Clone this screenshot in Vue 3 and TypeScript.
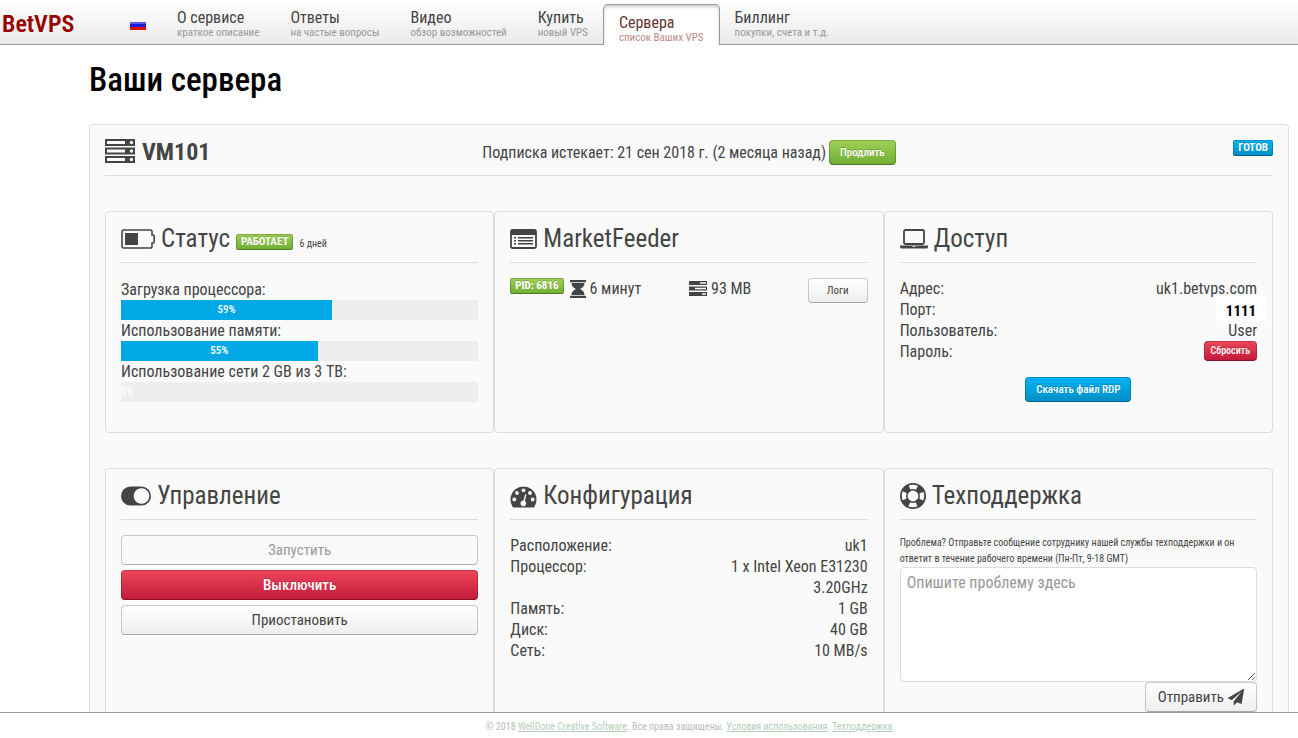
<script setup lang="ts">
import { ref } from 'vue'

interface NavItem {
  title: string
  note: string
  active?: boolean
}

interface Load {
  label: string
  percent: number
}

const nav: NavItem[] = [
  { title: 'О сервисе', note: 'краткое описание' },
  { title: 'Ответы', note: 'на частые вопросы' },
  { title: 'Видео', note: 'обзор возможностей' },
  { title: 'Купить', note: 'новый VPS' },
  { title: 'Сервера', note: 'список Ваших VPS', active: true },
  { title: 'Биллинг', note: 'покупки, счета и т.д.' },
]

const loads: Load[] = [
  { label: 'Загрузка процессора:', percent: 59 },
  { label: 'Использование памяти:', percent: 55 },
  { label: 'Использование сети 2 GB из 3 TB:', percent: 0 },
]

const config: [string, string][] = [
  ['Расположение:', 'uk1'],
  ['Процессор:', '1 x Intel Xeon E31230 3.20GHz'],
  ['Память:', '1 GB'],
  ['Диск:', '40 GB'],
  ['Сеть:', '10 MB/s'],
]

const message = ref('')
</script>

<template>
  <div class="page">
    <header class="top">
      <a class="logo" href="#">BetVPS</a>
      <a class="lang" href="#" aria-label="Русский">
        <svg width="16" height="11" viewBox="0 0 16 11">
          <rect width="16" height="11" fill="#f4f4f4" />
          <rect y="3" width="16" height="2" fill="#5a5af0" />
          <rect y="5" width="16" height="3" fill="#1c1cd8" />
          <rect y="8" width="16" height="3" fill="#e01010" />
        </svg>
      </a>
      <nav class="menu">
        <a v-for="item in nav" :key="item.title" href="#" class="menu-item" :class="{ active: item.active }">
          <span class="menu-title">{{ item.title }}</span>
          <span class="menu-note">{{ item.note }}</span>
        </a>
      </nav>
    </header>

    <main class="content">
      <h1>Ваши сервера</h1>
      <section class="panel">
        <div class="vm-head">
          <h2>
            <svg width="30" height="26" viewBox="0 0 30 26">
              <path d="M0 0h30v7H0zM0 8.500h30v7H0zM0 17h30v7H0z" fill="#444" />
              <path d="M2 2h18v3H2zM2 10.500h18v3H2zM2 19h18v3H2z" fill="#fafafa" />
              <g fill="#fafafa">
                <circle cx="26.500" cy="3.500" r="1.700" />
                <circle cx="26.500" cy="12" r="1.700" />
                <circle cx="26.500" cy="20.500" r="1.700" />
              </g>
            </svg>
            VM101
          </h2>
          <p class="expiry">
            Подписка истекает: 21 сен 2018 г. (2 месяца назад)
            <button type="button" class="btn small green">Продлить</button>
          </p>
          <span class="badge blue">ГОТОВ</span>
        </div>

        <div class="cards">
          <section class="card">
            <h3>
              <svg width="34" height="20" viewBox="0 0 34 20">
                <path d="M2.500 1h27a1.500 1.500 0 0 1 1.500 1.500V6h1.200a1 1 0 0 1 1 1v6a1 1 0 0 1-1 1H31v3.500a1.500 1.500 0 0 1-1.500 1.500h-27A1.500 1.500 0 0 1 1 17.500v-15A1.500 1.500 0 0 1 2.500 1z" fill="none" stroke="#444" stroke-width="1.600" />
                <path d="M4 4h13v12H4z" fill="#444" />
              </svg>
              Статус
              <span class="badge green">РАБОТАЕТ</span>
              <small>6 дней</small>
            </h3>
            <div class="loads">
              <div v-for="load in loads" :key="load.label">
                <div class="load-label">{{ load.label }}</div>
                <div class="track">
                  <div class="fill" :style="{ width: load.percent + '%' }">{{ load.percent }}%</div>
                </div>
              </div>
            </div>
          </section>

          <section class="card">
            <h3>
              <svg width="27" height="20" viewBox="0 0 27 20">
                <rect x="1" y="1" width="25" height="18" rx="1.500" fill="none" stroke="#444" stroke-width="1.800" />
                <path d="M1 1h25v5H1zM4 8h2v1.500H4zM8 8h15v1.500H8zM4 11h2v1.500H4zM8 11h15v1.500H8zM4 14h2v1.500H4zM8 14h15v1.500H8z" fill="#444" />
              </svg>
              MarketFeeder
            </h3>
            <div class="feeder">
              <div class="feeder-cell">
                <span class="badge green">PID: 6816</span>
                <svg class="gap-left" width="16" height="18" viewBox="0 0 16 18" fill="#444">
                  <path d="M0 0h16v2.200H0zM0 15.800h16V18H0zM1.500 3h13c0 3-2 5-4.500 6 2.500 1 4.500 3 4.500 6h-13c0-3 2-5 4.500-6-2.500-1-4.500-3-4.500-6z" />
                </svg>
                <span>6 минут</span>
              </div>
              <div class="feeder-cell">
                <svg width="18" height="15" viewBox="0 0 18 15" fill="#444">
                  <path fill-rule="evenodd" d="M0 0h18v4H0zM11 1.300v1.400h6V1.300zM0 5.500h18v4H0zM6 6.800v1.400h11V6.800zM0 11h18v4H0zM13 12.300v1.400h4v-1.400z" />
                </svg>
                <span>93 MB</span>
              </div>
              <button type="button" class="btn small logs">Логи</button>
            </div>
          </section>

          <section class="card">
            <h3>
              <svg width="28" height="20" viewBox="0 0 28 20">
                <rect x="4" y="1" width="20" height="14" rx="1.500" fill="none" stroke="#444" stroke-width="1.800" />
                <path fill-rule="evenodd" d="M0 16.500h28V18q0 1.500-2 1.500H2Q0 19.500 0 18zM12.500 17.200v.8h3v-.8z" fill="#444" />
              </svg>
              Доступ
            </h3>
            <dl class="rows">
              <dt>Адрес:</dt>
              <dd>uk1.betvps.com</dd>
              <dt>Порт:</dt>
              <dd class="port"><span>1111</span></dd>
              <dt>Пользователь:</dt>
              <dd>User</dd>
              <dt>Пароль:</dt>
              <dd><button type="button" class="btn mini red">Сбросить</button></dd>
            </dl>
            <div class="download">
              <button type="button" class="btn small blue">Скачать файл RDP</button>
            </div>
          </section>

          <section class="card">
            <h3>
              <svg width="30" height="20" viewBox="0 0 30 20">
                <path fill-rule="evenodd" d="M9.500 .5h11a9.500 9.500 0 0 1 0 19h-11a9.500 9.500 0 0 1 0-19zM20.500 2.200a7.800 7.800 0 1 0 .01 0z" fill="#444" />
              </svg>
              Управление
            </h3>
            <div class="actions">
              <button type="button" class="btn" disabled>Запустить</button>
              <button type="button" class="btn red">Выключить</button>
              <button type="button" class="btn">Приостановить</button>
            </div>
          </section>

          <section class="card">
            <h3>
              <svg class="lowered" width="27" height="22" viewBox="0 0 27 22">
                <path d="M13.500 .5A13 13 0 0 0 .5 13.500q0 4 2 7.200.4.800 1.300.800h19.400q.9 0 1.300-.800 2-3.200 2-7.200a13 13 0 0 0-13-13z" fill="#444" />
                <g fill="#fafafa">
                  <circle cx="4.300" cy="13.500" r="1.900" />
                  <circle cx="7" cy="7" r="1.900" />
                  <circle cx="13.500" cy="4.300" r="1.900" />
                  <circle cx="20" cy="7" r="1.900" />
                  <circle cx="22.700" cy="13.500" r="1.900" />
                  <path d="M15.200 8.300l1.300.3-1.700 6.300a2.900 2.900 0 1 1-1.400-.4z" />
                </g>
              </svg>
              Конфигурация
            </h3>
            <dl class="rows">
              <template v-for="[name, value] in config" :key="name">
                <dt>{{ name }}</dt>
                <dd>{{ value }}</dd>
              </template>
            </dl>
          </section>

          <section class="card">
            <h3>
              <svg width="26" height="26" viewBox="0 0 26 26">
                <circle cx="13" cy="13" r="12.100" fill="none" stroke="#444" stroke-width="1.800" />
                <circle cx="13" cy="13" r="6.200" fill="none" stroke="#444" stroke-width="1.600" />
                <circle cx="13" cy="13" r="9.200" fill="none" stroke="#444" stroke-width="6.600" stroke-dasharray="6.800 7.650" stroke-dashoffset="-3.820" />
              </svg>
              Техподдержка
            </h3>
            <form class="support" @submit.prevent>
              <label for="problem">Проблема? Отправьте сообщение сотруднику нашей службы техподдержки и он ответит в течение рабочего времени (Пн-Пт, 9-18 GMT)</label>
              <textarea id="problem" v-model="message" placeholder="Опишите проблему здесь"></textarea>
              <button type="submit" class="btn send">
                Отправить
                <svg width="16" height="16" viewBox="0 0 1792 1792" fill="#444">
                  <path d="M1764 11q33 24 27 64l-256 1536q-5 29-32 45-14 8-31 8-11 0-24-5l-453-185-242 295q-18 23-49 23-13 0-22-4-19-7-30.500-23.500t-11.500-36.500v-349l864-1059-1069 925-395-162q-37-14-40-55-2-40 32-59l1664-960q15-9 32-9 20 0 36 11z" />
                </svg>
              </button>
            </form>
          </section>
        </div>
      </section>
    </main>

    <footer class="bottom">
      © 2018 <a href="#">WellDone Creative Software</a>. Все права защищены. <a href="#">Условия использования</a>. <a href="#">Техподдержка</a>
    </footer>
  </div>
</template>

<style>
body {
  margin: 0;
  background: #fff;
}
</style>

<style scoped>
.page {
  display: flex;
  flex-direction: column;
  height: 100vh;
  font-family: "Roboto Condensed", Roboto, "Liberation Sans", sans-serif;
  font-size: 16px;
  line-height: 21px;
  color: #444;
}

.page *,
.page {
  box-sizing: border-box;
}

h1,
h2,
h3,
p,
dl,
dd {
  margin: 0;
}

svg {
  flex: none;
}

.top {
  display: flex;
  flex: none;
  height: 45px;
  border-bottom: 1px solid #999;
  background: linear-gradient(#fff, #eaeaea);
}

.logo {
  width: 130px;
  padding: 8px 0 0 2px;
  font-size: 24px;
  line-height: 32px;
  font-weight: 600;
  color: #900;
  text-decoration: none;
}

.lang {
  width: 31px;
  padding-top: 19px;
  line-height: 0;
}

.menu {
  display: flex;
}

.menu-item {
  display: flex;
  flex-direction: column;
  margin-left: 1px;
  padding: 9px 15px 0;
  color: #444;
  text-decoration: none;
  white-space: nowrap;
}

.menu-title {
  font-size: 16px;
  line-height: 18px;
}

.menu-note {
  font-size: 11px;
  line-height: 12px;
  color: #999;
}

.menu-item.active {
  margin: 4px -1px -1px 0;
  border: 1px solid #999;
  border-bottom: 0;
  border-radius: 5px 5px 0 0;
  background: #fff;
  box-shadow: inset 0 2px 3px rgba(0, 0, 0, 0.2);
  color: #633;
}

.menu-item.active .menu-note {
  color: #b88;
}

.content {
  flex: 1;
  min-height: 0;
  overflow: auto;
  scrollbar-width: none;
  padding: 14px 9px 0 89px;
}

h1 {
  margin-bottom: 23px;
  font-size: 33px;
  line-height: 42px;
  font-weight: 500;
  color: #000;
}

.panel {
  padding: 15px;
  border: 1px solid #ddd;
  border-radius: 4px;
  background: #fafafa;
}

.vm-head {
  display: grid;
  grid-template-columns: 1fr auto 1fr;
  align-items: start;
  height: 36px;
  margin-bottom: 35px;
  border-bottom: 1px solid #ddd;
}

.vm-head .badge {
  justify-self: end;
}

h2 {
  display: flex;
  align-items: center;
  gap: 7px;
  height: 24px;
  font-size: 24px;
  line-height: 24px;
}

.expiry {
  display: flex;
  align-items: center;
  gap: 3px;
}

.cards {
  display: grid;
  grid-template-columns: repeat(3, minmax(0, 1fr));
  row-gap: 35px;
}

.card {
  min-height: 222px;
  padding: 15px;
  border: 1px solid #ddd;
  border-radius: 4px;
}

h3 {
  display: flex;
  align-items: center;
  gap: 6px;
  height: 36px;
  padding-bottom: 12px;
  margin-bottom: 15px;
  border-bottom: 1px solid #ddd;
  font-size: 25px;
  line-height: 24px;
  font-weight: normal;
}

h3 .badge {
  margin-top: 6px;
}

h3 small {
  margin-top: 10px;
  font-size: 10px;
}

.lowered {
  margin-top: 2px;
}

.badge {
  display: block;
  padding: 0 4px;
  border: 1px solid rgba(0, 0, 0, 0.2);
  border-bottom-color: rgba(0, 0, 0, 0.3);
  border-radius: 2px;
  background-origin: border-box;
  font-size: 11px;
  line-height: 14px;
  font-weight: bold;
  color: #fff;
  white-space: nowrap;
}

.btn {
  height: 30px;
  padding: 0 12px;
  border: 1px solid rgba(0, 0, 0, 0.2);
  border-bottom-color: rgba(0, 0, 0, 0.3);
  border-radius: 4px;
  background-color: #f7f7f7;
  background-image: linear-gradient(#fff, #eee);
  background-origin: border-box;
  font-family: inherit;
  font-size: 15px;
  line-height: 28px;
  color: #444;
  white-space: nowrap;
}

.btn.small {
  height: 25px;
  padding: 0 10px;
  font-size: 11px;
  line-height: 23px;
}

.btn.mini {
  display: block;
  height: 20px;
  padding: 0 6px;
  font-size: 10px;
  line-height: 18px;
}

.btn:disabled {
  background: #fafafa;
  color: #999;
}

.btn.green,
.btn.blue,
.btn.red {
  font-weight: 500;
  color: #fff;
}

.green {
  background-image: linear-gradient(#9fd256, #6fac34);
  text-shadow: 0 -1px 0 rgba(0, 0, 0, 0.2);
}

.btn.green {
  background-image: linear-gradient(#9fd256, #6fac34);
}

.blue,
.btn.blue {
  background-image: linear-gradient(#00b4f5, #008dc5);
  text-shadow: 0 -1px 0 rgba(0, 0, 0, 0.2);
}

.btn.red {
  background-image: linear-gradient(#ee465a, #c11a39);
  text-shadow: 0 -1px 0 rgba(0, 0, 0, 0.2);
}

.loads {
  margin-top: 16px;
}

.track {
  height: 20px;
  background: #eee;
}

.fill {
  height: 20px;
  background: #00a8e6;
  font-size: 11px;
  font-weight: 500;
  line-height: 20px;
  text-align: center;
  color: #fff;
}

.feeder {
  display: grid;
  grid-template-columns: 50% 1fr auto;
  align-items: start;
}

.feeder-cell {
  display: flex;
  align-items: center;
  gap: 4px;
}

.feeder-cell .badge {
  margin-bottom: 5px;
}

.gap-left {
  margin-left: 2px;
}

.logs {
  width: 60px;
}

.rows {
  display: grid;
  grid-template-columns: 1fr 1fr;
}

.rows dd {
  display: flow-root;
  text-align: right;
}

.rows .btn {
  margin-left: auto;
}

.port {
  position: relative;
}

.port span {
  position: absolute;
  top: -3px;
  right: -9px;
  width: 50px;
  padding-top: 6px;
  background: #fff;
  font-size: 15px;
  line-height: 19px;
  text-align: center;
  font-weight: bold;
  color: #000;
}

.download {
  display: flex;
  justify-content: center;
  margin-top: 15px;
}

.actions {
  display: flex;
  flex-direction: column;
  gap: 5px;
}

.support {
  display: flex;
  flex-direction: column;
}

.support label {
  font-size: 10px;
  line-height: 16px;
}

textarea {
  height: 115px;
  padding: 4px 6px;
  border: 1px solid #ddd;
  border-radius: 4px;
  background: #fff;
  font-family: inherit;
  font-size: 16px;
  line-height: 21px;
  color: #444;
}

textarea::placeholder {
  color: #999;
}

.send {
  display: flex;
  align-items: center;
  align-self: flex-end;
  gap: 4px;
}

.bottom {
  flex: none;
  height: 26px;
  padding-left: 80px;
  border-top: 1px solid #999;
  background: #fff;
  font-size: 10px;
  line-height: 28px;
  text-align: center;
  color: #bbb;
}

.bottom a {
  color: #b5ccb9;
}
</style>
